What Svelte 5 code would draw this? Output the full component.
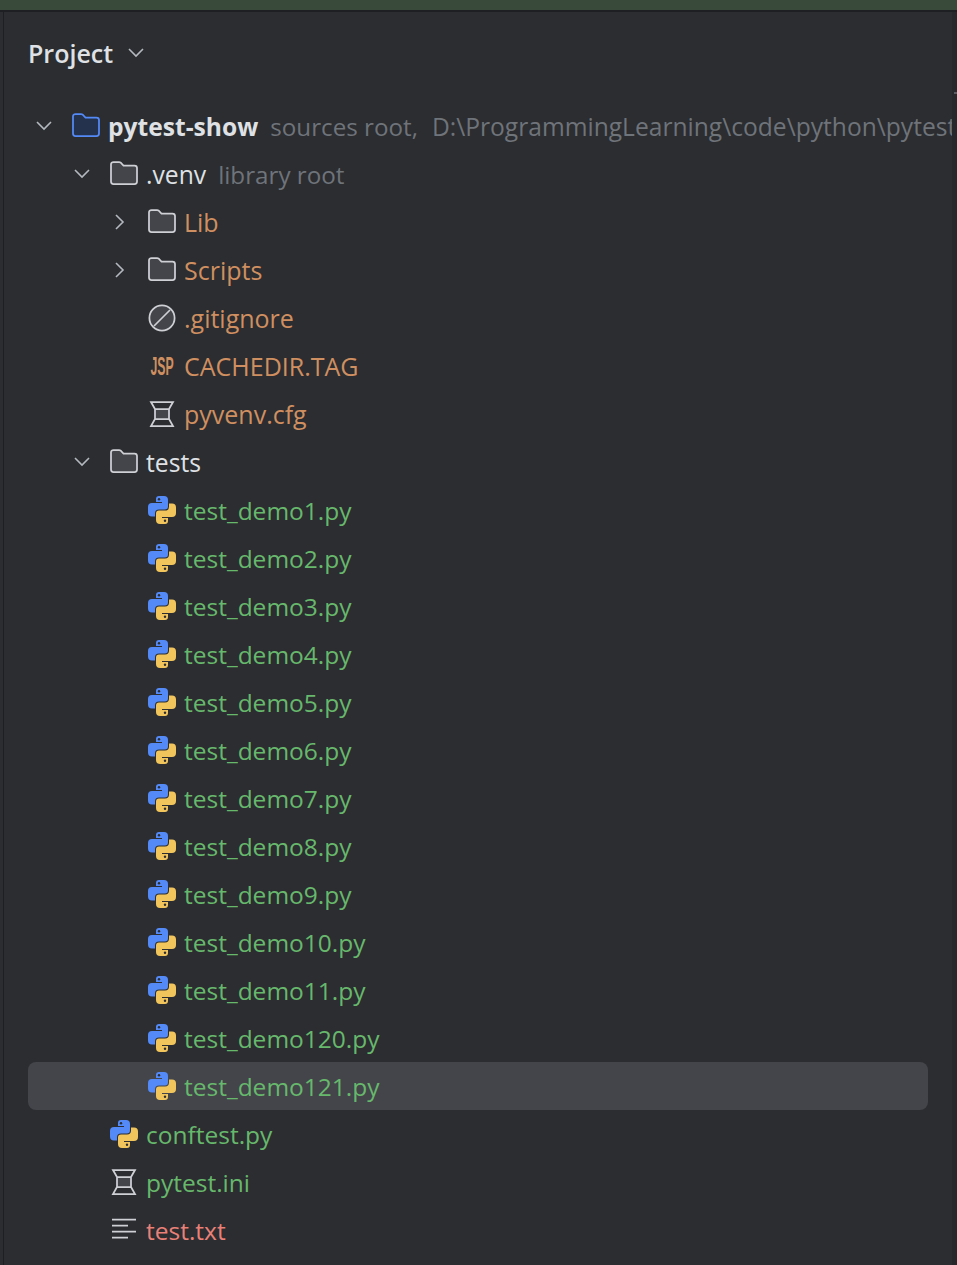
<script>
  const tests = ['1','2','3','4','5','6','7','8','9','10','11','120','121'];
  const rows = [
    { d: 0, ch: 'down', icon: 'root', name: 'pytest-show', hint: 'sources root,', path: 'D:\\ProgrammingLearning\\code\\python\\pytest-show', tone: 'root' },
    { d: 1, ch: 'down', icon: 'folder', name: '.venv', hint: 'library root', tone: 'plain' },
    { d: 2, ch: 'right', icon: 'folder', name: 'Lib', tone: 'orange' },
    { d: 2, ch: 'right', icon: 'folder', name: 'Scripts', tone: 'orange' },
    { d: 2, icon: 'ignore', name: '.gitignore', tone: 'orange' },
    { d: 2, icon: 'jsp', name: 'CACHEDIR.TAG', tone: 'orange' },
    { d: 2, icon: 'ini', name: 'pyvenv.cfg', tone: 'orange' },
    { d: 1, ch: 'down', icon: 'folder', name: 'tests', tone: 'plain' },
    ...tests.map((n) => ({ d: 2, icon: 'py', name: `test_demo${n}.py`, tone: 'green', sel: n === '121' })),
    { d: 1, icon: 'py', name: 'conftest.py', tone: 'green' },
    { d: 1, icon: 'ini', name: 'pytest.ini', tone: 'green' },
    { d: 1, icon: 'txt', name: 'test.txt', tone: 'red' }
  ];
  const snake = 'M11 0H16a4 4 0 0 1 4 4v6.400a3 3 0 0 1-3 3h-6a4 4 0 0 0-4 4v3.100H4a4 4 0 0 1-4-4V11a4 4 0 0 1 4-4H14V6H8V3a3 3 0 0 1 3-3Z';
  const folder = 'M3.500 2H9a2.500 2.500 0 0 1 1.700.7L13.500 5.500h11A2.500 2.500 0 0 1 27 8v13.500a2.500 2.500 0 0 1-2.500 2.500h-21A2.500 2.500 0 0 1 1 21.500v-17A2.500 2.500 0 0 1 3.500 2Z';
</script>

{#snippet icon(kind)}
  <svg class="icon" viewBox="0 0 28 28" aria-hidden="true">
    {#if kind === 'root'}
      <path d={folder} fill="#25324d" stroke="#548af7" stroke-width="1.75" />
    {:else if kind === 'folder'}
      <path d={folder} fill="#43454a" stroke="#ced0d6" stroke-width="1.75" />
    {:else if kind === 'ignore'}
      <circle cx="14" cy="14" r="12.600" fill="#43454a" stroke="#ced0d6" stroke-width="1.75" />
      <path d="M6 22 22 6" stroke="#ced0d6" stroke-width="1.75" />
    {:else if kind === 'jsp'}
      <text transform="translate(2.500 22.500) scale(.49 1)" class="jsp">JSP</text>
    {:else if kind === 'ini'}
      <path d="M7 9h14v10H7Z" fill="#43454a" />
      <path d="M3 2h22l-4 7v10l4 7H3l4-7V9ZM7 9h14M7 19h14" fill="none" stroke="#ced0d6" stroke-width="1.75" />
    {:else if kind === 'txt'}
      <path d="M2 3.500h24M2 9.500h16M2 15.500h24M2 21.500h16" fill="none" stroke="#ced0d6" stroke-width="1.75" />
    {:else}
      <path d={snake} fill="#548af7" />
      <circle cx="11" cy="3.200" r="1.200" fill="#2b2d30" />
      <g transform="rotate(180 14 14)">
        <path d={snake} fill="#f2c55c" />
        <circle cx="11" cy="3.200" r="1.200" fill="#2b2d30" />
      </g>
    {/if}
  </svg>
{/snippet}

<div class="top"></div>
<div class="body">
  <main class="panel">
    <header class="head">
      <span class="title">Project</span>
      <svg class="chev" viewBox="0 0 16 16" aria-hidden="true"><path d="M1 4l7 7 7-7" /></svg>
    </header>
    <div class="tree">
      {#each rows as r}
        <div class="row d{r.d}" class:sel={r.sel}>
          <span class="slot">
            {#if r.ch === 'down'}
              <svg class="chev" viewBox="0 0 16 16" aria-hidden="true"><path d="M1 4l7 7 7-7" /></svg>
            {:else if r.ch === 'right'}
              <svg class="chev" viewBox="0 0 16 16" aria-hidden="true"><path d="M4 1l7 7-7 7" /></svg>
            {/if}
          </span>
          {@render icon(r.icon)}
          <span class="name {r.tone}">{r.name}</span>
          {#if r.hint}<span class="hint">{r.hint}</span>{/if}
          {#if r.path}<span class="path">{r.path}</span>{/if}
        </div>
      {/each}
    </div>
  </main>
  <aside class="strip"><span class="tick"></span></aside>
</div>

<style>
  :global(body) {
    margin: 0;
    background: #2b2d30;
  }
  .top {
    height: 10px;
    background: #3a4a3a;
    border-bottom: 2px solid #1e1f22;
  }
  .body {
    display: flex;
    height: 1253px;
    padding-left: 3px;
    box-sizing: border-box;
  }
  .panel {
    flex: 1;
    min-width: 0;
    box-sizing: border-box;
    border-left: 1px solid #1e1f22;
    overflow: hidden;
    font-family: "Open Sans", "Noto Sans", sans-serif;
    font-size: 24.5px;
    color: #dfe1e5;
    background: #2b2d30;
  }
  .strip {
    width: 5px;
    flex: none;
    background: #26282b;
    padding-top: 80px;
    box-sizing: border-box;
    display: flex;
    flex-direction: column;
    align-items: flex-end;
  }
  .tick {
    width: 3px;
    height: 2px;
    background: #5a5d63;
  }
  .head {
    height: 82px;
    display: flex;
    align-items: center;
    padding-left: 24px;
    gap: 15px;
  }
  .title {
    font-size: 25px;
    font-weight: 600;
  }
  .tree {
    padding: 8px 0 0 24px;
  }
  .row {
    height: 48px;
    width: 900px;
    box-sizing: border-box;
    display: flex;
    align-items: center;
    border-radius: 8px;
    white-space: nowrap;
  }
  .sel {
    background: #43454a;
  }
  .d1 { padding-left: 38px; }
  .d2 { padding-left: 76px; }
  .slot {
    width: 44px;
    flex: none;
    display: flex;
    padding-left: 7.5px;
    box-sizing: border-box;
  }
  .chev {
    width: 16px;
    height: 16px;
    flex: none;
    fill: none;
    stroke: #b4b8bf;
    stroke-width: 1.6;
  }
  .icon {
    width: 28px;
    height: 28px;
    flex: none;
    margin-right: 8px;
  }
  .jsp {
    font-family: "Liberation Sans", sans-serif;
    font-size: 25px;
    font-weight: 700;
    fill: #d08f60;
  }
  .plain { font-size: 24.7px; }
  .root { font-weight: 700; font-size: 24.6px; }
  .orange { color: #d08f60; font-size: 25px; }
  .green { color: #67b86c; }
  .red { color: #ea8077; }
  .hint {
    margin-left: 12px;
    font-size: 24.2px;
    color: #6f737a;
  }
  .path {
    margin-left: 14px;
    font-size: 24.6px;
    color: #6f737a;
  }
</style>
